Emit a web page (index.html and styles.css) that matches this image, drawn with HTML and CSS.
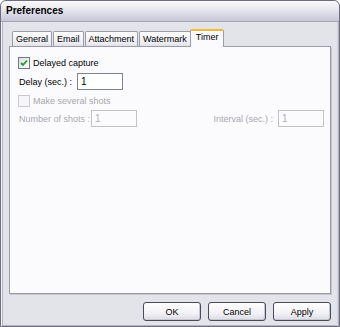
FILE: index.html
```html
<!DOCTYPE html>
<html>
<head>
<meta charset="utf-8">
<link rel="stylesheet" href="styles.css">
</head>
<body>
<div class="window">
  <div class="titlebar">Preferences</div>
  <div class="body">
    <div class="tabs">
      <div class="tab">General</div>
      <div class="tab">Email</div>
      <div class="tab">Attachment</div>
      <div class="tab">Watermark</div>
      <div class="tab active">Timer</div>
    </div>
    <div class="panel">
      <div class="row check-row">
        <span class="cb checked"><svg width="8" height="8" viewBox="0 0 8 8"><path d="M1 4 L3 6 L7 1.5" fill="none" stroke="#22a022" stroke-width="1.8"/></svg></span>
        <span class="cb-label">Delayed capture</span>
      </div>
      <div class="row field-row">
        <span class="lbl lbl-delay">Delay (sec.) :</span>
        <span class="input">1</span>
      </div>
      <div class="row check-row disabled second">
        <span class="cb"></span>
        <span class="cb-label">Make several shots</span>
      </div>
      <div class="row field-row disabled split">
        <div class="group">
          <span class="lbl lbl-num">Number of shots :</span>
          <span class="input">1</span>
        </div>
        <div class="group">
          <span class="lbl lbl-int">Interval (sec.) :</span>
          <span class="input">1</span>
        </div>
      </div>
    </div>
    <div class="buttons">
      <button class="btn">OK</button>
      <button class="btn">Cancel</button>
      <button class="btn">Apply</button>
    </div>
  </div>
</div>
</body>
</html>
```

FILE: styles.css
```css
html, body {
  margin: 0;
  padding: 0;
  background: #ffffff;
}
body {
  font-family: "Liberation Sans", Arial, sans-serif;
  font-size: 9px;
  color: #000;
}
.window {
  width: 340px;
  height: 327px;
  box-sizing: border-box;
  border: 1px solid #6e6e80;
  border-radius: 6px 6px 0 0;
  background: #e3e3ea;
  box-shadow: inset 1px 0 0 #f6f6f9, inset 2px 0 0 #b4b4c0, inset -1px 0 0 #b4b4c0, inset -2px 0 0 #d4d4dc, inset 0 -1px 0 #b4b4c0;
  display: flex;
  flex-direction: column;
  overflow: hidden;
}
.titlebar {
  height: 21px;
  box-sizing: border-box;
  border-bottom: 1px solid #a6a6b6;
  background: linear-gradient(#fafafc 0%, #e8e8f0 40%, #c6c6d8 100%);
  font-weight: bold;
  font-size: 10px;
  line-height: 20px;
  padding-left: 5px;
  color: #000;
  border-radius: 5px 5px 0 0;
}
.body {
  flex: 1;
  display: flex;
  flex-direction: column;
  padding: 7px 8px 5px 8px;
  min-height: 0;
}
.tabs {
  display: flex;
  align-items: flex-end;
  height: 17px;
  padding-left: 3px;
  gap: 1px;
}
.tab {
  height: 15px;
  box-sizing: border-box;
  padding: 0 3px;
  border: 1px solid #9c9ca8;
  border-bottom: none;
  border-radius: 2px 2px 0 0;
  background: linear-gradient(#fefeff, #ececf2 80%, #e0e0e8);
  line-height: 14px;
  color: #000;
}
.tab.active {
  height: 18px;
  margin: 0 0 -1px -2px;
  padding: 0 5px;
  border-top: 2px solid #f6b838;
  border-color: #f6b838 #9c9ca8 #9c9ca8 #9c9ca8;
  background: #fbfbfd;
  position: relative;
  z-index: 1;
  line-height: 13px;
}
.panel {
  flex: 1;
  border: 1px solid #9c9ca8;
  background: #fbfbfd;
  padding: 9px 6px 0 8px;
  box-shadow: 1px 1px 0 #c4c4cc;
}
.row {
  display: flex;
  align-items: center;
}
.check-row {
  height: 14px;
}
.check-row.second {
  margin-top: 4px;
}
.field-row {
  height: 17px;
  margin-top: 3px;
}
.field-row.split {
  justify-content: space-between;
  margin-top: 2px;
}
.group {
  display: flex;
  align-items: center;
}
.cb {
  width: 12px;
  height: 12px;
  box-sizing: border-box;
  border: 1px solid #6c7a8c;
  background: linear-gradient(135deg, #dcdce4, #ffffff);
  display: flex;
  align-items: center;
  justify-content: center;
}
.cb-label {
  margin-left: 3px;
}
.disabled .cb {
  border-color: #cacad2;
  background: #f6f6f8;
}
.disabled {
  color: #a8a8b0;
}
.lbl {
  padding-left: 1px;
}
.lbl-delay {
  width: 58px;
}
.lbl-num {
  width: 72px;
}
.lbl-int {
  margin-right: 5px;
}
.input {
  width: 46px;
  height: 17px;
  box-sizing: border-box;
  border: 1px solid #7e8494;
  background: #fff;
  padding-left: 3px;
  line-height: 15px;
  font-size: 10px;
}
.disabled .input {
  border-color: #c2c2ca;
  background: #fbfbfd;
  color: #b0b0b8;
}
.buttons {
  display: flex;
  justify-content: flex-end;
  gap: 7px;
  margin-top: 8px;
}
.btn {
  width: 58px;
  height: 19px;
  box-sizing: border-box;
  border: 1px solid #4a4a5c;
  border-radius: 3px;
  background: linear-gradient(#ffffff, #f2f2f6 60%, #dadae2);
  font-family: "Liberation Sans", Arial, sans-serif;
  font-size: 9px;
  color: #000;
  padding: 0;
  box-shadow: inset -1px -1px 0 #c8c8d2;
}
```
